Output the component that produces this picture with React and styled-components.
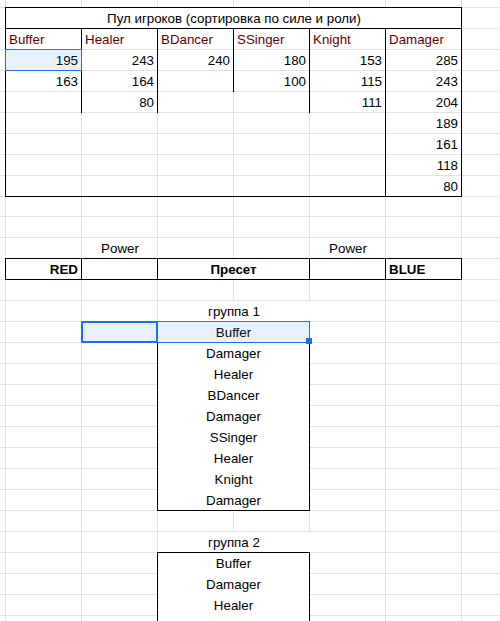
import React from 'react';
import styled, { createGlobalStyle, css } from 'styled-components';

const GRID = '#e2e2e2';
const INK = '#000';
const BLUE = '#1a73e8';

const GlobalStyle = createGlobalStyle`
  html, body { margin: 0; padding: 0; background: #fff; }
  body { font-family: "Liberation Sans", Arial, sans-serif; }
`;

const area = css`
  grid-column: ${(p) => p.$col};
  grid-row: ${(p) => p.$row};
`;

const justify = { left: 'flex-start', right: 'flex-end', center: 'center' };

const Sheet = styled.div`
  display: grid;
  width: 500px;
  height: 621px;
  overflow: hidden;
  grid-template-columns: 6px repeat(7, 76px);
  grid-template-rows: 8px repeat(9, 21px) 20px repeat(19, 21px);
  grid-auto-rows: 21px;
  font-size: 13.33px;
  line-height: 15px;
  color: ${INK};
  background: #fff;
`;

const Blank = styled.div`
  ${area};
  box-sizing: border-box;
  border-right: 1px solid ${GRID};
  border-bottom: 1px solid ${GRID};
`;

const Title = styled.div`
  grid-column: 2 / 8;
  grid-row: 2;
  box-sizing: border-box;
  background: #fff;
  border-bottom: 1px solid ${INK};
  display: flex;
  align-items: flex-end;
  justify-content: center;
  padding-bottom: 2px;
  white-space: nowrap;
`;

const RoleColumn = styled.div`
  ${area};
  margin-left: -1px;
  border-left: 1px solid ${INK};
  border-right: 1px solid ${INK};
  display: flex;
  flex-direction: column;
`;

const RowCell = styled.div`
  flex: none;
  height: 21px;
  box-sizing: border-box;
  display: flex;
  align-items: flex-end;
  justify-content: ${(p) => justify[p.$align || 'left']};
  padding: 0 3px 3px;
  white-space: nowrap;
`;

const RoleHeader = styled(RowCell)`
  color: #600000;
`;

const TableFrame = styled.div`
  grid-column: 2 / 8;
  grid-row: 2 / 11;
  margin: -1px 0 0 -1px;
  border: 1px solid ${INK};
`;

const Label = styled.div`
  ${area};
  box-sizing: border-box;
  display: flex;
  align-items: flex-end;
  justify-content: center;
  padding: 0 3px 3px;
  white-space: nowrap;
  background: ${(p) => (p.$merged ? '#fff' : 'transparent')};
`;

const BoxCell = styled.div`
  ${area};
  margin: -1px 0 0 -1px;
  border: 1px solid ${INK};
  background: #fff;
  display: flex;
  align-items: flex-end;
  justify-content: ${(p) => justify[p.$align || 'left']};
  padding: 0 3px 2px;
  font-weight: bold;
  white-space: nowrap;
`;

const GroupBox = styled.div`
  ${area};
  margin: -1px 0 0 -1px;
  border: 1px solid ${INK};
  background: #fff;
  display: flex;
  flex-direction: column;
`;

const RangeSelection = styled.div`
  ${area};
  position: relative;
  margin: -1px 0 0 -1px;
  border: 1px solid ${BLUE};
  background: rgba(26, 115, 232, 0.1);
`;

const ActiveCell = styled.div`
  ${area};
  margin: -1px 0 0 -1px;
  border: 2px solid ${BLUE};
`;

const FillHandle = styled.span`
  position: absolute;
  right: -3px;
  bottom: -2px;
  width: 6px;
  height: 6px;
  background: ${BLUE};
`;

const roles = [
  { name: 'Buffer', values: [195, 163] },
  { name: 'Healer', values: [243, 164, 80] },
  { name: 'BDancer', values: [240] },
  { name: 'SSinger', values: [180, 100] },
  { name: 'Knight', values: [153, 115, 111] },
  { name: 'Damager', values: [285, 243, 204, 189, 161, 118, 80] },
];

const group1 = ['Buffer', 'Damager', 'Healer', 'BDancer', 'Damager', 'SSinger', 'Healer', 'Knight', 'Damager'];
const group2 = ['Buffer', 'Damager', 'Healer'];

const blanks = [];
for (let r = 1; r <= 31; r++) {
  for (let c = 1; c <= 8; c++) blanks.push([r, c]);
}

function Group({ title, row, members }) {
  return (
    <>
      <Label $col="4 / 6" $row={row} $merged>{title}</Label>
      <GroupBox $col="4 / 6" $row={`${row + 1} / span 9`}>
        {members.map((name, i) => (
          <RowCell key={i} $align="center">{name}</RowCell>
        ))}
      </GroupBox>
    </>
  );
}

export default function App() {
  return (
    <>
      <GlobalStyle />
      <Sheet>
        {blanks.map(([r, c]) => (
          <Blank key={`${r}-${c}`} $row={r} $col={c} />
        ))}

        <Title>Пул игроков (сортировка по силе и роли)</Title>
        {roles.map((role, i) => (
          <RoleColumn key={role.name} $col={i + 2} $row={`3 / span ${role.values.length + 1}`}>
            <RoleHeader>{role.name}</RoleHeader>
            {role.values.map((v, j) => (
              <RowCell key={j} $align="right">{v}</RowCell>
            ))}
          </RoleColumn>
        ))}
        <TableFrame />

        <Label $col={3} $row={13}>Power</Label>
        <Label $col={6} $row={13}>Power</Label>

        <BoxCell $col={2} $row={14} $align="right">RED</BoxCell>
        <BoxCell $col={3} $row={14} />
        <BoxCell $col="4 / 6" $row={14} $align="center">Пресет</BoxCell>
        <BoxCell $col={6} $row={14} />
        <BoxCell $col={7} $row={14} $align="left">BLUE</BoxCell>

        <Group title="группа 1" row={16} members={group1} />
        <Group title="группа 2" row={27} members={group2} />

        <RangeSelection $col={2} $row={4} />
        <RangeSelection $col="3 / 6" $row={17}>
          <FillHandle />
        </RangeSelection>
        <ActiveCell $col={3} $row={17} />
      </Sheet>
    </>
  );
}
